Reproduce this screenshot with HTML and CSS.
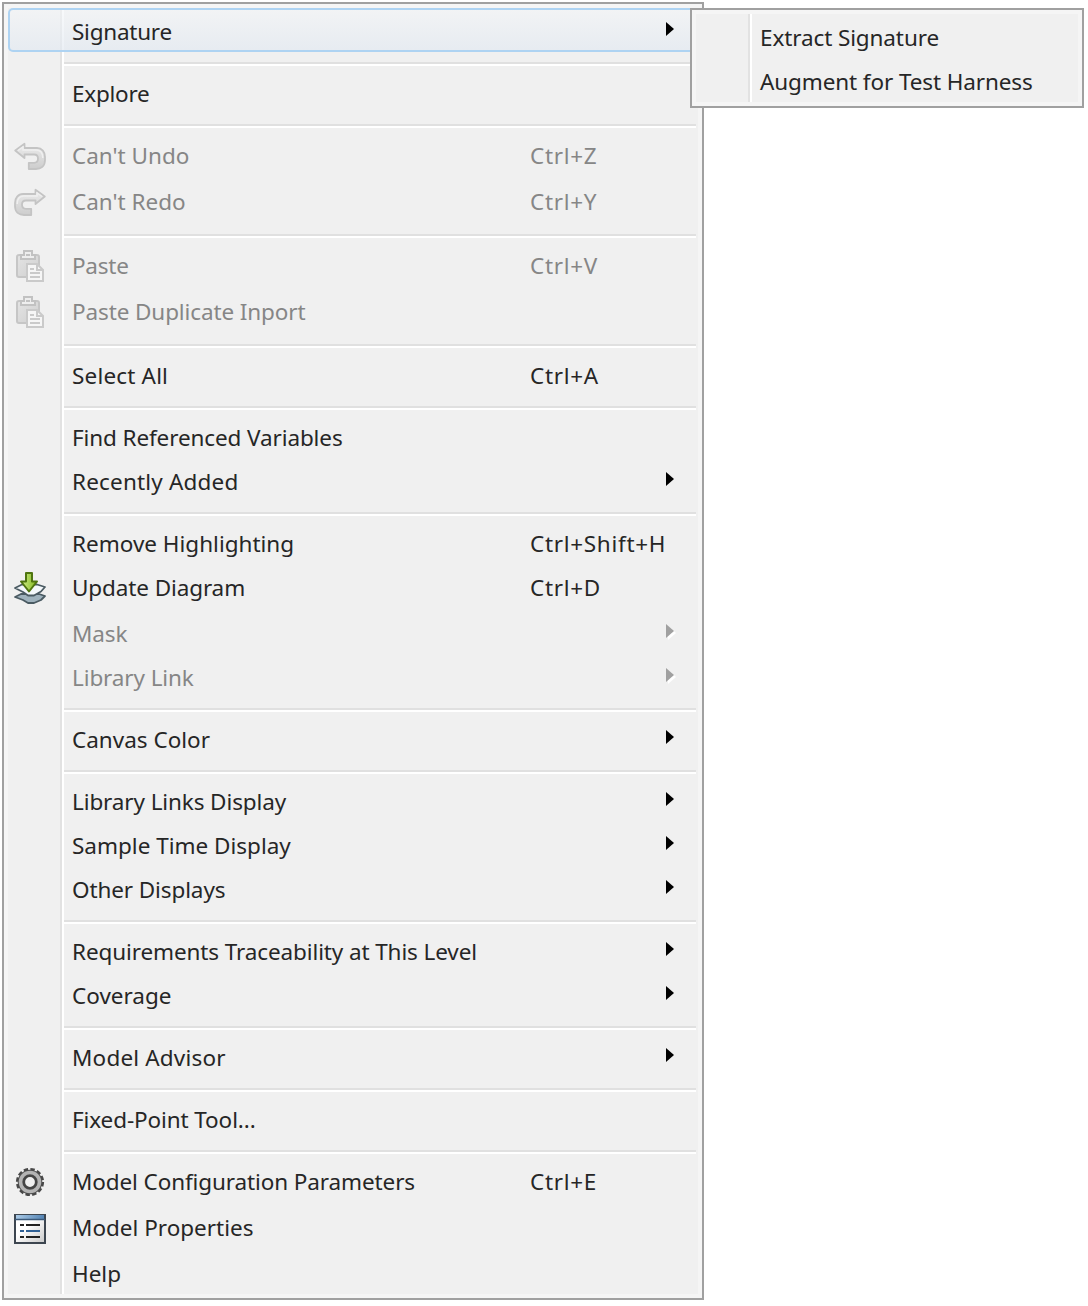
FILE: index.html
```html
<!DOCTYPE html>
<html lang="en">
<head>
<meta charset="utf-8">
<title>Model context menu</title>
<link rel="stylesheet" href="styles.css">
</head>
<body>
<svg class="defs" aria-hidden="true">
  <defs>
    <linearGradient id="fade" x1="0" y1="0" x2="0" y2="1"><stop offset="0" stop-color="#ececec"/><stop offset="1" stop-color="#cdcdcd"/></linearGradient>
    <linearGradient id="board" x1="0" y1="0" x2="1" y2="1"><stop offset="0" stop-color="#e4e4e4"/><stop offset="1" stop-color="#cfcfcf"/></linearGradient>
    <linearGradient id="bar" x1="0" y1="0" x2="1" y2="0"><stop offset="0" stop-color="#a9c9e6"/><stop offset="1" stop-color="#5484b4"/></linearGradient>
    <linearGradient id="sheet" x1="0" y1="0" x2="1" y2="1"><stop offset=".4" stop-color="#fff"/><stop offset="1" stop-color="#c8c8c8"/></linearGradient>
    <linearGradient id="leaf" x1="0" y1="0" x2="1" y2="0"><stop offset="0" stop-color="#d3f08a"/><stop offset="1" stop-color="#7fb51d"/></linearGradient>
    <symbol id="turn" viewBox="0 0 32 32">
      <path d="M1.200 10.500 10.500 3.800V8H23C28 8 31 12 31 17V20C31 26 27 29 22 29H14.800V22.800H20C23 22.800 24 21 24 18.500C24 16 23 14.500 20 14.500H10.500V18Z" fill="url(#fade)" stroke="#c4c4c4" stroke-width="1.800" stroke-linejoin="round"/>
      <path d="M4 10.500 9 7V10H22C26.500 10 28.800 13 28.800 18" fill="none" stroke="#efefef" stroke-width="1.500"/>
    </symbol>
    <symbol id="clip" viewBox="0 0 32 32">
      <rect x="3" y="5" width="22" height="22" rx="2" fill="url(#board)" stroke="#c6c6c6" stroke-width="2"/>
      <path d="M7 9V5H10V1H18V5H21V9Z" fill="#eee" stroke="#c2c2c2" stroke-width="2"/>
      <path d="M12 5H16" stroke="#c2c2c2" stroke-width="2"/>
      <path d="M13 14H23L29 20V31H13Z" fill="#f6f6f6" stroke="#cacaca" stroke-width="2"/>
      <path d="M23 14V20H29M16 19H20M16 23H26M16 27H26" fill="none" stroke="#cacaca" stroke-width="2"/>
    </symbol>
    <symbol id="arrow" viewBox="0 0 10 16"><path d="M0 0 8 7 0 14Z"/></symbol>
  </defs>
</svg>

<main class="stage">
  <div class="menu">
    <div class="rows">
      <div class="item active"><span class="label tight">Signature</span><svg class="arrow"><use href="#arrow"/></svg></div>
      <hr class="sep">
      <div class="item"><span class="label tight">Explore</span></div>
      <hr class="sep">
      <div class="item tall off"><svg class="icon"><use href="#turn"/></svg><span class="label even">Can't Undo</span><span class="key">Ctrl+Z</span></div>
      <div class="item tall off"><svg class="icon flip"><use href="#turn"/></svg><span class="label even">Can't Redo</span><span class="key">Ctrl+Y</span></div>
      <hr class="sep">
      <div class="item tall off"><svg class="icon"><use href="#clip"/></svg><span class="label tight">Paste</span><span class="key">Ctrl+V</span></div>
      <div class="item tall off"><svg class="icon"><use href="#clip"/></svg><span class="label">Paste Duplicate Inport</span></div>
      <hr class="sep">
      <div class="item"><span class="label wide">Select All</span><span class="key">Ctrl+A</span></div>
      <hr class="sep">
      <div class="item"><span class="label">Find Referenced Variables</span></div>
      <div class="item"><span class="label wide">Recently Added</span><svg class="arrow"><use href="#arrow"/></svg></div>
      <hr class="sep">
      <div class="item"><span class="label even">Remove Highlighting</span><span class="key">Ctrl+Shift+H</span></div>
      <div class="item tall"><svg class="icon" viewBox="0 0 32 32">
        <g stroke="#4b5b63" stroke-width="1.800" stroke-linejoin="round"><path d="M1 25 7 22H25L31 24 27 28 20 31H14L9 28Z" fill="#9fb2bd"/><path d="M1 16 8 12.500H23L31 15 27 19.500 20 23.500H14L9 20Z" fill="#f4f8fb"/></g>
        <path d="M12 1H18V9.500H23L15 19.500 7 9.500H12Z" fill="url(#leaf)" stroke="#4f7410" stroke-width="2" stroke-linejoin="round"/>
      </svg><span class="label">Update Diagram</span><span class="key">Ctrl+D</span></div>
      <div class="item off"><span class="label">Mask</span><svg class="arrow"><use href="#arrow"/></svg></div>
      <div class="item off"><span class="label">Library Link</span><svg class="arrow"><use href="#arrow"/></svg></div>
      <hr class="sep">
      <div class="item"><span class="label even">Canvas Color</span><svg class="arrow"><use href="#arrow"/></svg></div>
      <hr class="sep">
      <div class="item"><span class="label">Library Links Display</span><svg class="arrow"><use href="#arrow"/></svg></div>
      <div class="item"><span class="label even">Sample Time Display</span><svg class="arrow"><use href="#arrow"/></svg></div>
      <div class="item"><span class="label">Other Displays</span><svg class="arrow"><use href="#arrow"/></svg></div>
      <hr class="sep">
      <div class="item"><span class="label">Requirements Traceability at This Level</span><svg class="arrow"><use href="#arrow"/></svg></div>
      <div class="item"><span class="label even">Coverage</span><svg class="arrow"><use href="#arrow"/></svg></div>
      <hr class="sep">
      <div class="item"><span class="label wide">Model Advisor</span><svg class="arrow"><use href="#arrow"/></svg></div>
      <hr class="sep">
      <div class="item"><span class="label">Fixed-Point Tool...</span></div>
      <hr class="sep">
      <div class="item tall"><svg class="icon" viewBox="0 0 32 32">
        <circle cx="16" cy="16" r="12.300" fill="none" stroke="#484848" stroke-width="3.600" stroke-dasharray="4.200 2.240"/>
        <circle cx="16" cy="16" r="8.800" fill="none" stroke="#4c4c4c" stroke-width="7"/>
        <circle cx="16" cy="16" r="9.500" fill="none" stroke="#b4b4b4" stroke-width="3.600"/>
        <circle cx="16" cy="16" r="6" fill="#efefef" stroke="#444" stroke-width="2.200"/>
      </svg><span class="label">Model Configuration Parameters</span><span class="key">Ctrl+E</span></div>
      <div class="item tall"><svg class="icon" viewBox="0 0 32 32">
        <rect x="1" y="3" width="30" height="28" fill="url(#sheet)" stroke="#3d4650" stroke-width="2"/>
        <rect x="2" y="3" width="28" height="4" fill="url(#bar)"/>
        <path d="M1 7.500H31" stroke="#3b5878" stroke-width="1.500"/>
        <path d="M6 13H10M12 13H26M6 25H10M12 25H26" stroke="#222" stroke-width="2.200"/>
        <path d="M6 19H10M12 19H26" stroke="#2f6095" stroke-width="2.200"/>
      </svg><span class="label even">Model Properties</span></div>
      <div class="item"><span class="label even">Help</span></div>
    </div>
  </div>

  <div class="menu submenu">
    <div class="rows">
      <div class="item"><span class="label">Extract Signature</span></div>
      <div class="item"><span class="label">Augment for Test Harness</span></div>
    </div>
  </div>
</main>
</body>
</html>
```
FILE: styles.css
```css
* { box-sizing: border-box; }
body {
  margin: 0;
  background: #fff;
  color: #262626;
  font: 22.5px/40px "Noto Sans", "Open Sans", sans-serif;
}
.defs { position: absolute; width: 0; height: 0; }
.stage { position: relative; height: 1306px; padding: 2px; }
.menu {
  width: 702px;
  border: 2px solid #a0a0a0;
  background: #f5f5f5;
  padding: 4px;
}
.rows {
  background: linear-gradient(90deg, #e2e2e2 50%, #fff 50%) 52px 0 / 4px 100% no-repeat #f0f0f0;
}
.item {
  display: grid;
  grid-template-columns: 64px 458px 136px 1fr;
  height: 44px;
  padding-top: 4px;
  white-space: nowrap;
}
.tall { height: 46px; }
.label { grid-column: 2; letter-spacing: -.11px; }
.tight { letter-spacing: -.25px; }
.even { letter-spacing: 0; }
.wide { letter-spacing: .18px; }
.key { grid-column: 3; letter-spacing: .7px; }
.icon { grid-column: 1; width: 32px; height: 32px; margin: 4px 0 0 6px; }
.flip { transform: scaleX(-1); }
.arrow {
  grid-column: 4;
  grid-row: 1;
  width: 10px;
  height: 16px;
  margin-top: 10px;
  fill: #000;
}
.off { color: #868686; }
.off .arrow { fill: #a0a0a0; filter: drop-shadow(2px 2px 0 #fff); }
.active {
  background: linear-gradient(rgba(244, 246, 248, .6), rgba(226, 233, 241, .7));
  box-shadow: inset 0 0 0 2px #aed3f2;
  border-radius: 5px;
}
.sep {
  height: 18px;
  margin: 0 2px 0 56px;
  border: 0;
  background: linear-gradient(#e0e0e0 50%, #fff 50%) 0 10px / 100% 4px no-repeat;
}
.submenu { position: absolute; left: 690px; top: 8px; width: 394px; }
.submenu .item { grid-template-columns: 64px 1fr; }
```
